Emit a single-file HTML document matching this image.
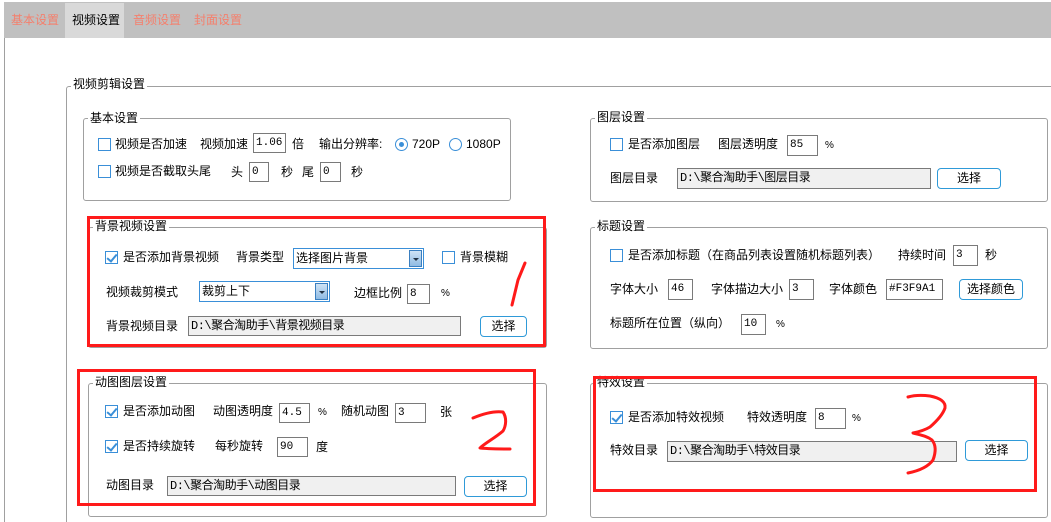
<!DOCTYPE html>
<html style="overflow:hidden;width:1051px;height:522px"><head><meta charset="utf-8"><style>
*{margin:0;padding:0;box-sizing:border-box}
body{width:1051px;height:522px;overflow:hidden;background:#fff;position:relative;font-family:"Liberation Sans","Noto Sans CJK SC",sans-serif;font-size:12px;color:#000}
.a{position:absolute}
.t{position:absolute;line-height:16px;white-space:nowrap}
.g{position:absolute;border:1px solid #a0a0a0;border-radius:3px}
.gt{position:absolute;background:#fff;line-height:16px;padding:0 2px;white-space:nowrap}
.cb{position:absolute;width:13px;height:13px;border:1px solid #3a8fd8;background:#fff}
.cb.on::after{content:"";position:absolute;left:3px;top:0px;width:4px;height:8px;border:solid #3a8fd8;border-width:0 2px 2px 0;transform:rotate(40deg)}
.in{position:absolute;border:1px solid #7a7a7a;background:#fff;font-family:"Liberation Mono","Noto Sans CJK SC",monospace;font-size:11px;line-height:18px;padding-left:2px;white-space:nowrap;overflow:hidden}
.pth{position:absolute;border:1px solid #7a7a7a;background:#f0f0f0;line-height:18px;padding-left:2px;white-space:nowrap;overflow:hidden;font-family:"Liberation Mono","Noto Sans CJK SC",monospace;font-size:12px;letter-spacing:-0.5px}
.btn{position:absolute;border:1px solid #2f9ad8;border-radius:4px;background:#fff;text-align:center;line-height:18px}
.sel{position:absolute;border:1px solid #3a8fd8;background:#fff;line-height:18px;padding-left:2px}
.sel i{position:absolute;right:1px;top:1px;width:13px;height:17px;background:linear-gradient(#cfe3f5,#8fbbe3);border:1px solid #3a7fc0}
.sel i::after{content:"";position:absolute;left:3px;top:7px;border:3px solid transparent;border-top:3px solid #234}
.red{position:absolute;border:3px solid #ff1a1a}
.rd{position:absolute;width:13px;height:13px;border:1px solid #3a8fd8;border-radius:50%;background:#fff}
</style></head><body>
<div class="a" style="left:4px;top:2px;width:1047px;height:36px;background:#c0c0c0"></div>
<div class="a" style="left:65px;top:3px;width:59px;height:35px;background:#d9d9d9"></div>
<div class="t" style="left:11px;top:12px;color:#f57f6c">基本设置</div>
<div class="t" style="left:72px;top:12px">视频设置</div>
<div class="t" style="left:133px;top:12px;color:#f57f6c">音频设置</div>
<div class="t" style="left:194px;top:12px;color:#f57f6c">封面设置</div>
<div class="a" style="left:4px;top:38px;width:1px;height:484px;background:#a0a0a0"></div>

<div class="g" style="left:66px;top:86px;width:1000px;height:450px"></div>
<div class="gt" style="left:71px;top:76px">视频剪辑设置</div>

<div class="g" style="left:83px;top:118px;width:428px;height:83px"></div>
<div class="gt" style="left:88px;top:110px">基本设置</div>
<div class="cb" style="left:98px;top:138px"></div>
<div class="t" style="left:115px;top:136px">视频是否加速</div>
<div class="t" style="left:200px;top:136px">视频加速</div>
<div class="in" style="left:253px;top:133px;width:33px;height:20px">1.06</div>
<div class="t" style="left:292px;top:136px">倍</div>
<div class="t" style="left:319px;top:136px">输出分辨率:</div>
<div class="rd" style="left:395px;top:138px"><div class="a" style="left:3px;top:3px;width:5px;height:5px;border-radius:50%;background:#3a8fd8"></div></div>
<div class="t" style="left:412px;top:136px">720P</div>
<div class="rd" style="left:449px;top:138px"></div>
<div class="t" style="left:466px;top:136px">1080P</div>
<div class="cb" style="left:98px;top:165px"></div>
<div class="t" style="left:115px;top:163px">视频是否截取头尾</div>
<div class="t" style="left:231px;top:164px">头</div>
<div class="in" style="left:249px;top:162px;width:20px;height:20px">0</div>
<div class="t" style="left:281px;top:164px">秒</div>
<div class="t" style="left:302px;top:164px">尾</div>
<div class="in" style="left:320px;top:162px;width:21px;height:20px">0</div>
<div class="t" style="left:351px;top:164px">秒</div>

<div class="g" style="left:88px;top:227px;width:459px;height:121px"></div>
<div class="gt" style="left:93px;top:218px">背景视频设置</div>
<div class="cb on" style="left:105px;top:251px"></div>
<div class="t" style="left:123px;top:249px">是否添加背景视频</div>
<div class="t" style="left:236px;top:249px">背景类型</div>
<div class="sel" style="left:293px;top:248px;width:131px;height:21px">选择图片背景<i></i></div>
<div class="cb" style="left:442px;top:251px"></div>
<div class="t" style="left:460px;top:249px">背景模糊</div>
<div class="t" style="left:106px;top:284px">视频裁剪模式</div>
<div class="sel" style="left:199px;top:281px;width:131px;height:21px">裁剪上下<i></i></div>
<div class="t" style="left:354px;top:285px">边框比例</div>
<div class="in" style="left:407px;top:284px;width:23px;height:20px">8</div>
<div class="t" style="left:441px;top:286px;font-size:10px">%</div>
<div class="t" style="left:106px;top:318px">背景视频目录</div>
<div class="pth" style="left:188px;top:316px;width:273px;height:20px">D:\聚合淘助手\背景视频目录</div>
<div class="btn" style="left:480px;top:316px;width:47px;height:21px">选择</div>

<div class="g" style="left:88px;top:383px;width:459px;height:134px"></div>
<div class="gt" style="left:93px;top:374px">动图图层设置</div>
<div class="cb on" style="left:105px;top:405px"></div>
<div class="t" style="left:123px;top:403px">是否添加动图</div>
<div class="t" style="left:213px;top:403px">动图透明度</div>
<div class="in" style="left:279px;top:403px;width:31px;height:20px">4.5</div>
<div class="t" style="left:318px;top:405px;font-size:10px">%</div>
<div class="t" style="left:341px;top:403px">随机动图</div>
<div class="in" style="left:395px;top:403px;width:31px;height:20px">3</div>
<div class="t" style="left:440px;top:404px">张</div>
<div class="cb on" style="left:105px;top:440px"></div>
<div class="t" style="left:123px;top:438px">是否持续旋转</div>
<div class="t" style="left:215px;top:438px">每秒旋转</div>
<div class="in" style="left:277px;top:437px;width:31px;height:20px">90</div>
<div class="t" style="left:316px;top:439px">度</div>
<div class="t" style="left:106px;top:477px">动图目录</div>
<div class="pth" style="left:167px;top:476px;width:289px;height:20px">D:\聚合淘助手\动图目录</div>
<div class="btn" style="left:464px;top:476px;width:63px;height:21px">选择</div>

<div class="g" style="left:590px;top:118px;width:458px;height:84px"></div>
<div class="gt" style="left:595px;top:109px">图层设置</div>
<div class="cb" style="left:610px;top:138px"></div>
<div class="t" style="left:628px;top:136px">是否添加图层</div>
<div class="t" style="left:718px;top:136px">图层透明度</div>
<div class="in" style="left:787px;top:135px;width:31px;height:21px">85</div>
<div class="t" style="left:825px;top:138px;font-size:10px">%</div>
<div class="t" style="left:610px;top:170px">图层目录</div>
<div class="pth" style="left:677px;top:168px;width:254px;height:21px">D:\聚合淘助手\图层目录</div>
<div class="btn" style="left:937px;top:168px;width:64px;height:21px">选择</div>

<div class="g" style="left:590px;top:227px;width:458px;height:122px"></div>
<div class="gt" style="left:595px;top:218px">标题设置</div>
<div class="cb" style="left:610px;top:249px"></div>
<div class="t" style="left:628px;top:247px">是否添加标题（在商品列表设置随机标题列表）</div>
<div class="t" style="left:898px;top:247px">持续时间</div>
<div class="in" style="left:953px;top:245px;width:25px;height:21px">3</div>
<div class="t" style="left:985px;top:247px">秒</div>
<div class="t" style="left:610px;top:281px">字体大小</div>
<div class="in" style="left:668px;top:279px;width:25px;height:21px">46</div>
<div class="t" style="left:711px;top:281px">字体描边大小</div>
<div class="in" style="left:789px;top:279px;width:25px;height:21px">3</div>
<div class="t" style="left:829px;top:281px">字体颜色</div>
<div class="in" style="left:886px;top:279px;width:57px;height:21px">#F3F9A1</div>
<div class="btn" style="left:959px;top:279px;width:64px;height:21px">选择颜色</div>
<div class="t" style="left:610px;top:315px">标题所在位置（纵向）</div>
<div class="in" style="left:741px;top:314px;width:25px;height:21px">10</div>
<div class="t" style="left:776px;top:317px;font-size:10px">%</div>

<div class="g" style="left:590px;top:383px;width:458px;height:135px"></div>
<div class="gt" style="left:595px;top:374px">特效设置</div>
<div class="cb on" style="left:610px;top:411px"></div>
<div class="t" style="left:628px;top:409px">是否添加特效视频</div>
<div class="t" style="left:747px;top:409px">特效透明度</div>
<div class="in" style="left:815px;top:408px;width:31px;height:21px">8</div>
<div class="t" style="left:852px;top:411px;font-size:10px">%</div>
<div class="t" style="left:610px;top:442px">特效目录</div>
<div class="pth" style="left:667px;top:441px;width:290px;height:21px">D:\聚合淘助手\特效目录</div>
<div class="btn" style="left:965px;top:440px;width:63px;height:21px">选择</div>

<div class="red" style="left:87px;top:216px;width:459px;height:131px"></div>
<div class="red" style="left:77px;top:369px;width:459px;height:137px"></div>
<div class="red" style="left:593px;top:376px;width:444px;height:116px"></div>
<svg class="a" style="left:0;top:0" width="1051" height="522" fill="none" stroke="#ff1a1a" stroke-width="3" stroke-linecap="round" stroke-linejoin="round">
<path d="M525 263 L518 280 L512 305"/>
<path d="M473 418 C485 413 495 411 503 412 C507 418 506 426 503 431 C495 438 485 443 480 448 C490 449 500 449 510 449"/>
<path d="M908 397 C915 395 922 395 930 396 C940 398 946 402 945 408 C943 414 938 420 930 427 C925 430 918 432 913 433 C920 435 927 436 932 440 C936 445 936 452 933 460 C928 467 918 471 908 473"/>
</svg>
</body></html>
